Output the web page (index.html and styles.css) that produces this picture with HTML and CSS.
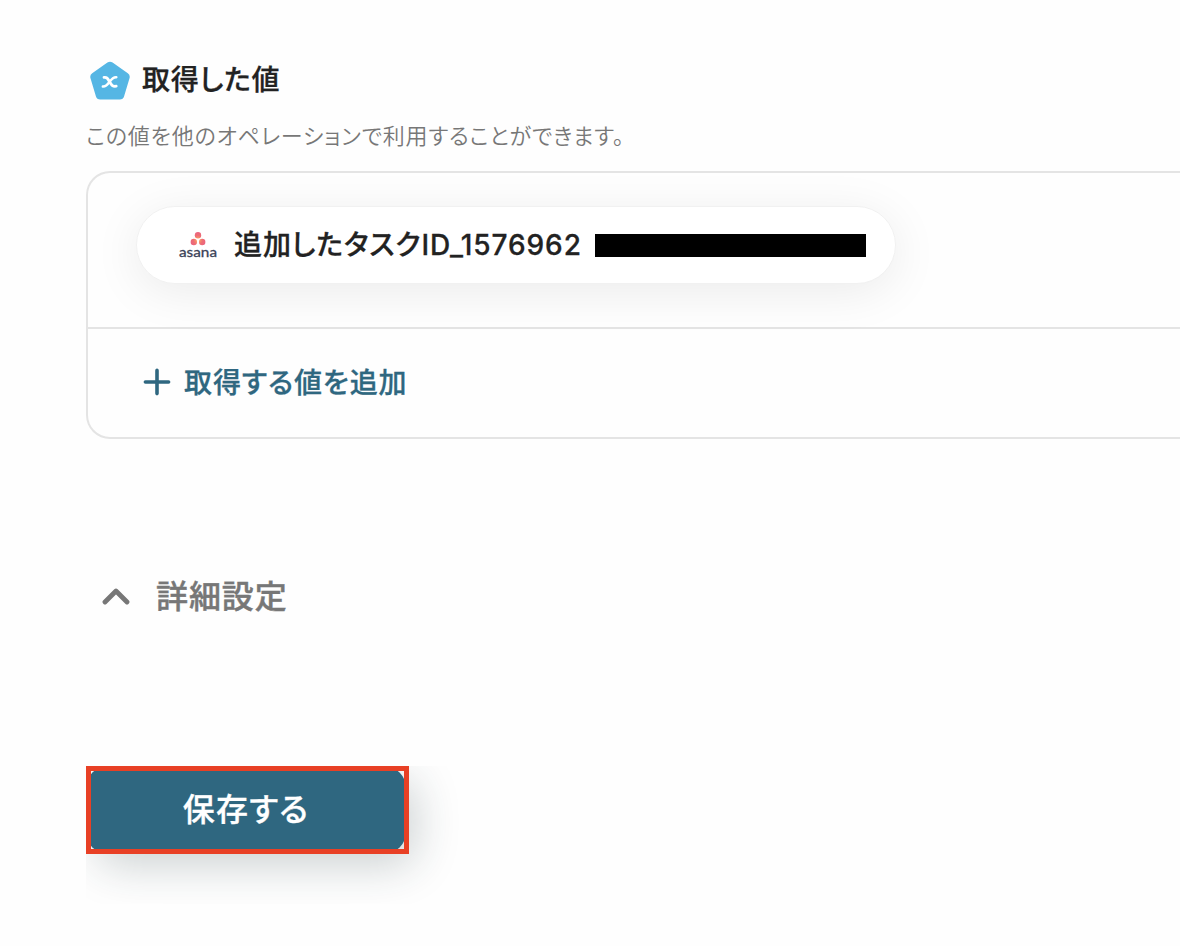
FILE: index.html
```html
<!DOCTYPE html>
<html lang="ja">
<head>
  <meta charset="UTF-8">
  <meta name="viewport" content="width=device-width, initial-scale=1.0">
  <title>取得した値</title>
  <link rel="stylesheet" href="styles.css">
</head>
<body>
  <div class="container">
    <div class="section-header">
      <svg class="section-icon" width="40" height="40" viewBox="0 0 40 40">
        <path d="M20 6.3 L35.2 17 L29.8 35 H10.2 L4.8 17 Z" fill="#55b6e4" stroke="#55b6e4" stroke-width="9" stroke-linejoin="round"/>
        <path d="M14 17.4 C16.8 17 17.6 18.2 19.6 21.8 C21.6 25.4 22.8 26.8 26.2 26.2" fill="none" stroke="#fff" stroke-width="2.8" stroke-linecap="round"/>
        <path d="M26.4 17.2 C23.4 16.9 21.8 18.6 19.6 21.8 C17.4 25 16 26.7 12.8 26.5" fill="none" stroke="#fff" stroke-width="2.4" stroke-linecap="round"/>
      </svg>
      <h2>取得した値</h2>
    </div>
    <p class="description">この値を他のオペレーションで利用することができます。</p>

    <div class="value-box">
      <div class="value-row">
        <div class="value-chip">
          <svg class="asana-logo" width="40" height="28" viewBox="0 0 40 28">
            <defs>
              <radialGradient id="asana-dots" gradientUnits="userSpaceOnUse" cx="20" cy="9" r="9">
                <stop offset="0" stop-color="#ffb25c"/>
                <stop offset="0.5" stop-color="#ee6e74"/>
                <stop offset="1" stop-color="#e96083"/>
              </radialGradient>
            </defs>
            <circle cx="20" cy="4.2" r="3.2" fill="url(#asana-dots)"/>
            <circle cx="15.8" cy="11" r="3.2" fill="url(#asana-dots)"/>
            <circle cx="24.2" cy="11" r="3.2" fill="url(#asana-dots)"/>
            <text class="asana-name" x="1" y="25.5" textLength="38" lengthAdjust="spacingAndGlyphs">asana</text>
          </svg>
          <span class="value-name">追加したタスクID_1576962</span>
          <span class="mask"></span>
        </div>
      </div>
      <div class="add-row">
        <svg width="28" height="28" viewBox="0 0 28 28">
          <path d="M2.4 14 H25.6 M14 2.4 V25.6" stroke="#2f6780" stroke-width="3.6" stroke-linecap="round"/>
        </svg>
        <span>取得する値を追加</span>
      </div>
    </div>

    <div class="detail-toggle">
      <svg width="28" height="20" viewBox="0 0 28 20">
        <path d="M3 17 L14 6 L25 17" fill="none" stroke="#777" stroke-width="4.8" stroke-linecap="round" stroke-linejoin="round"/>
      </svg>
      <span>詳細設定</span>
    </div>

    <div class="save-area">
      <button class="save-button">保存する</button>
      <div class="highlight"></div>
    </div>
  </div>
</body>
</html>
```

FILE: styles.css
```css
* {
  box-sizing: border-box;
}

body {
  margin: 0;
  background-color: #fefefe;
  color: #222;
  font-family: Inter, "Noto Sans CJK JP", sans-serif;
  font-feature-settings: "palt";
  letter-spacing: 0.9px;
}

.container {
  padding: 60px 0 0 86px;
}

.section-header {
  display: flex;
  align-items: center;
  gap: 12px;
  height: 40px;
  padding-left: 4px;
}

.section-header h2 {
  margin: 0;
  font-size: 28px;
  font-weight: 500;
  line-height: 40px;
  letter-spacing: 0.8px;
  -webkit-text-stroke: 0.3px;
}

.description {
  margin: 20px 0 19px;
  color: #777;
  font-size: 22px;
  font-weight: 350;
  line-height: 32px;
  letter-spacing: 0.8px;
}

/* the box runs off the right edge of the page */
.value-box {
  height: 268px;
  border: 2px solid #e4e4e4;
  border-right: none;
  border-radius: 24px 0 0 24px;
  overflow: hidden;
}

.value-row {
  height: 156px;
  padding: 33px 48px;
  border-bottom: 2px solid #e4e4e4;
}

.value-chip {
  display: flex;
  align-items: center;
  width: 760px;
  height: 78px;
  padding-left: 41px;
  border: 1px solid #f1f1f1;
  border-radius: 39px;
  background-color: #fff;
  box-shadow: 0 8px 48px rgba(0, 0, 0, 0.08);
}

.asana-name {
  fill: #3a4258;
  font-family: Lato, sans-serif;
  font-size: 14px;
  font-weight: 400;
  letter-spacing: 0;
  stroke: #3a4258;
  stroke-width: 0.3px;
}

.value-name {
  width: 348px;
  margin: 0 13px 0 16px;
  font-size: 28px;
  font-weight: 500;
  line-height: 40px;
  white-space: nowrap;
  -webkit-text-stroke: 0.3px;
}

.mask {
  width: 271px;
  height: 23px;
  background-color: #000;
}

.add-row {
  display: flex;
  align-items: center;
  gap: 13px;
  height: 108px;
  padding: 0 0 2px 55px;
  color: #2f6780;
  font-size: 28px;
  font-weight: 500;
  -webkit-text-stroke: 0.3px;
}

.add-row span {
  padding-bottom: 2px;
}

.detail-toggle {
  display: flex;
  align-items: center;
  gap: 26px;
  height: 48px;
  margin-top: 132px;
  padding-left: 16px;
  color: #777;
  font-size: 32px;
  font-weight: 500;
  -webkit-text-stroke: 0.4px;
}

.detail-toggle span {
  padding-bottom: 2px;
}

.save-area {
  position: relative;
  width: 400px;
  height: 138px;
  margin-top: 147px;
  overflow: hidden;
}

.save-button {
  width: 320px;
  height: 88px;
  padding: 0 0 6px;
  border: none;
  border-radius: 22px;
  background-color: #2f6780;
  box-shadow: 10px 12px 44px rgba(30, 55, 60, 0.22);
  color: #fff;
  font-family: inherit;
  font-feature-settings: inherit;
  font-size: 32px;
  font-weight: 500;
  letter-spacing: 1.2px;
  -webkit-text-stroke: 0.3px;
  cursor: pointer;
}

.highlight {
  position: absolute;
  top: 0;
  left: 0;
  width: 323px;
  height: 88px;
  border: 5px solid #e84025;
}
```
